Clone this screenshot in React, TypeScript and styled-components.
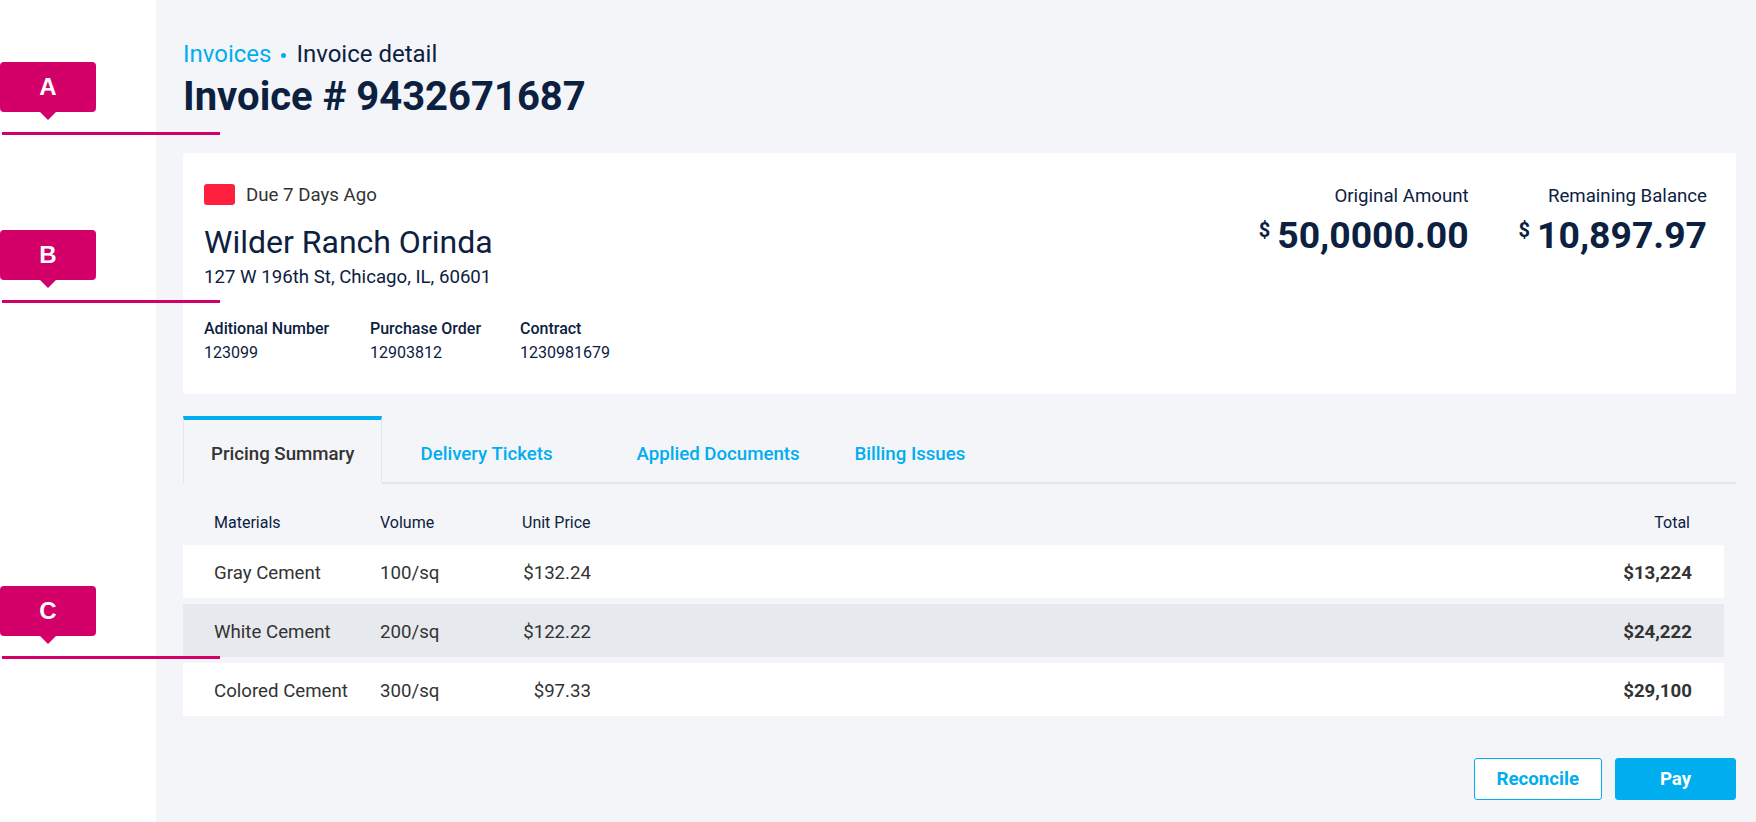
import React from 'react';
import styled, { createGlobalStyle } from 'styled-components';

const NAVY = '#0c213f';
const BLUE = '#00aeef';
const PINK = '#d4006a';
const INK = '#333333';
const LINE = '#e2e5ea';
const BG = '#f4f5f9';

const GlobalStyle = createGlobalStyle`
  html, body {
    margin: 0;
    padding: 0;
  }
  body {
    font-family: Roboto, 'Liberation Sans', sans-serif;
    background: ${BG};
    -webkit-font-smoothing: antialiased;
  }
  * {
    box-sizing: border-box;
  }
`;

const Page = styled.div`
  position: relative;
  display: flex;
  min-height: 100vh;
`;

const Sidebar = styled.aside`
  width: 156px;
  flex-shrink: 0;
  background: #fff;
`;

const Main = styled.main`
  flex: 1;
  display: flex;
  flex-direction: column;
  background: ${BG};
  padding: 41px 20px 23px 27px;
`;

// annotation markers (A, B, C) sit over the sidebar and bleed into the content
const Annotation = styled.div<{ $top: number }>`
  position: absolute;
  left: 0;
  top: ${p => p.$top}px;
`;

const Tag = styled.div`
  position: relative;
  width: 96px;
  height: 50px;
  border-radius: 4px;
  background: ${PINK};
  color: #fff;
  display: flex;
  align-items: center;
  justify-content: center;
  font-family: 'Liberation Sans', Arial, sans-serif;
  font-weight: 700;
  font-size: 24px;

  &::after {
    content: '';
    position: absolute;
    left: 40px;
    bottom: -8px;
    border-left: 8px solid transparent;
    border-right: 8px solid transparent;
    border-top: 8px solid ${PINK};
  }
`;

const Marker = styled.div`
  width: 218px;
  height: 3px;
  margin: 20px 0 0 2px;
  background: ${PINK};
`;

const Breadcrumb = styled.div`
  font-size: 24px;
  line-height: 26px;
  color: ${NAVY};
  display: flex;
  align-items: center;
`;

const Crumb = styled.span`
  color: ${BLUE};
`;

const Dot = styled.span`
  width: 5px;
  height: 5px;
  border-radius: 50%;
  background: ${BLUE};
  margin: 2px 10px 0;
`;

const Title = styled.h1`
  margin: 6px 0 0;
  font-size: 40px;
  line-height: 48px;
  font-weight: 700;
  color: ${NAVY};
`;

const Card = styled.section`
  margin-top: 32px;
  background: #fff;
  border-radius: 3px;
  padding: 31px 29px 31px 21px;
  display: flex;
  justify-content: space-between;
`;

const StatusRow = styled.div`
  display: flex;
  align-items: center;
  gap: 11px;
  height: 21px;
`;

const StatusBadge = styled.span`
  width: 31px;
  height: 21px;
  border-radius: 3px;
  background: #ff2040;
`;

const StatusText = styled.span`
  font-size: 18.67px;
  line-height: 21px;
  padding-top: 2px;
  color: ${INK};
`;

const Customer = styled.div`
  margin-top: 19px;
  font-size: 32px;
  line-height: 36px;
  color: ${NAVY};
`;

const Address = styled.div`
  margin-top: 6px;
  font-size: 18.67px;
  line-height: 22px;
  color: ${NAVY};
`;

const Details = styled.div`
  margin-top: 31px;
  display: grid;
  grid-template-columns: 166px 150px auto;
`;

const DetailLabel = styled.div`
  font-size: 16px;
  line-height: 20px;
  font-weight: 500;
  color: ${NAVY};
`;

const DetailValue = styled.div`
  margin-top: 4px;
  font-size: 16px;
  line-height: 20px;
  color: ${NAVY};
`;

const Amounts = styled.div`
  display: flex;
  gap: 50px;
  padding-top: 1px;
`;

const AmountBlock = styled.div`
  display: flex;
  flex-direction: column;
  align-items: flex-end;
`;

const AmountLabel = styled.div`
  font-size: 18.67px;
  line-height: 22px;
  color: ${NAVY};
`;

const AmountValue = styled.div`
  margin-top: 6px;
  display: flex;
  align-items: flex-start;
  color: ${NAVY};
  font-weight: 700;
`;

const Currency = styled.span`
  font-size: 20px;
  line-height: 20px;
  margin: 7px 7px 0 0;
`;

const Figure = styled.span`
  font-size: 37.33px;
  line-height: 44px;
`;

const TabBar = styled.nav`
  margin-top: 22px;
  display: flex;
  border-bottom: 2px solid ${LINE};
`;

const Tab = styled.div<{ $active?: boolean; $width?: number }>`
  width: ${p => (p.$width ? `${p.$width}px` : 'auto')};
  padding: 23px ${p => (p.$active ? '27px' : '0')} 17px ${p => (p.$active ? '27px' : '37px')};
  margin-bottom: -2px;
  font-size: 18.67px;
  line-height: 22px;
  font-weight: 500;
  color: ${p => (p.$active ? INK : BLUE)};
  background: ${p => (p.$active ? BG : 'transparent')};
  border-top: 4px solid ${p => (p.$active ? BLUE : 'transparent')};
  border-left: 1px solid ${p => (p.$active ? LINE : 'transparent')};
  border-right: 1px solid ${p => (p.$active ? LINE : 'transparent')};
  border-bottom: 2px solid ${p => (p.$active ? BG : 'transparent')};
  white-space: nowrap;
`;

const Table = styled.div`
  margin: 29px 12px 0 0;
  display: flex;
  flex-direction: column;
  gap: 6px;
`;

const columns = '166px 142px 69px 1fr';

const HeadRow = styled.div`
  display: grid;
  grid-template-columns: ${columns};
  padding: 0 34px 6px 31px;
  font-size: 16px;
  line-height: 20px;
  font-weight: 500;
  color: ${NAVY};
`;

const Row = styled.div<{ $shaded?: boolean }>`
  display: grid;
  grid-template-columns: ${columns};
  align-items: center;
  height: 53px;
  padding: 3px 32px 0 31px;
  background: ${p => (p.$shaded ? '#e6e9ed' : '#fff')};
  font-size: 18.67px;
  color: ${INK};
`;

const Cell = styled.div<{ $align?: 'left' | 'right'; $bold?: boolean }>`
  text-align: ${p => p.$align || 'left'};
  font-weight: ${p => (p.$bold ? 700 : 400)};
  white-space: nowrap;
`;

const Actions = styled.div`
  margin-top: 42px;
  display: flex;
  justify-content: flex-end;
  gap: 13px;
`;

const Button = styled.button<{ $primary?: boolean }>`
  height: 42px;
  min-width: 121px;
  padding: 0 22px;
  border-radius: 3px;
  border: 1px solid ${BLUE};
  background: ${p => (p.$primary ? BLUE : '#fff')};
  color: ${p => (p.$primary ? '#fff' : BLUE)};
  font-family: Roboto, 'Liberation Sans', sans-serif;
  font-size: 18.67px;
  font-weight: 700;
  cursor: pointer;
`;

const materials = [
  { name: 'Gray Cement', volume: '100/sq', price: '$132.24', total: '$13,224' },
  { name: 'White Cement', volume: '200/sq', price: '$122.22', total: '$24,222' },
  { name: 'Colored Cement', volume: '300/sq', price: '$97.33', total: '$29,100' },
];

const markers = [
  { letter: 'A', top: 62 },
  { letter: 'B', top: 230 },
  { letter: 'C', top: 586 },
];

export default function App() {
  return (
    <Page>
      <GlobalStyle />
      <Sidebar />
      <Main>
        <Breadcrumb>
          <Crumb>Invoices</Crumb>
          <Dot />
          <span>Invoice detail</span>
        </Breadcrumb>
        <Title>Invoice # 9432671687</Title>

        <Card>
          <div>
            <StatusRow>
              <StatusBadge />
              <StatusText>Due 7 Days Ago</StatusText>
            </StatusRow>
            <Customer>Wilder Ranch Orinda</Customer>
            <Address>127 W 196th St, Chicago, IL, 60601</Address>
            <Details>
              <div>
                <DetailLabel>Aditional Number</DetailLabel>
                <DetailValue>123099</DetailValue>
              </div>
              <div>
                <DetailLabel>Purchase Order</DetailLabel>
                <DetailValue>12903812</DetailValue>
              </div>
              <div>
                <DetailLabel>Contract</DetailLabel>
                <DetailValue>1230981679</DetailValue>
              </div>
            </Details>
          </div>
          <Amounts>
            <AmountBlock>
              <AmountLabel>Original Amount</AmountLabel>
              <AmountValue>
                <Currency>$</Currency>
                <Figure>50,0000.00</Figure>
              </AmountValue>
            </AmountBlock>
            <AmountBlock>
              <AmountLabel>Remaining Balance</AmountLabel>
              <AmountValue>
                <Currency>$</Currency>
                <Figure>10,897.97</Figure>
              </AmountValue>
            </AmountBlock>
          </Amounts>
        </Card>

        <TabBar>
          <Tab $active>Pricing Summary</Tab>
          <Tab $width={216}>Delivery Tickets</Tab>
          <Tab $width={218}>Applied Documents</Tab>
          <Tab>Billing Issues</Tab>
        </TabBar>

        <Table>
          <HeadRow>
            <Cell>Materials</Cell>
            <Cell>Volume</Cell>
            <Cell>Unit Price</Cell>
            <Cell $align="right">Total</Cell>
          </HeadRow>
          {materials.map((m, i) => (
            <Row key={m.name} $shaded={i === 1}>
              <Cell>{m.name}</Cell>
              <Cell>{m.volume}</Cell>
              <Cell $align="right">{m.price}</Cell>
              <Cell $align="right" $bold>{m.total}</Cell>
            </Row>
          ))}
        </Table>

        <Actions>
          <Button>Reconcile</Button>
          <Button $primary>Pay</Button>
        </Actions>
      </Main>

      {markers.map(m => (
        <Annotation key={m.letter} $top={m.top}>
          <Tag>{m.letter}</Tag>
          <Marker />
        </Annotation>
      ))}
    </Page>
  );
}
